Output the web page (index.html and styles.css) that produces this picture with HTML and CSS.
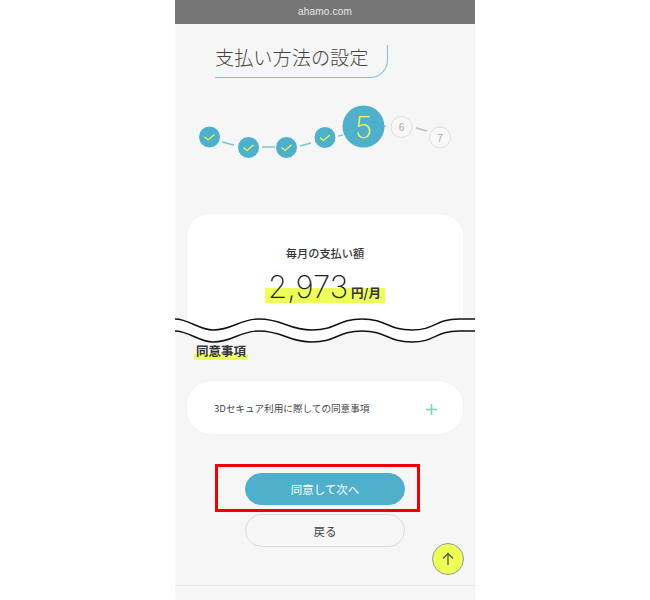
FILE: index.html
```html
<!DOCTYPE html>
<html lang="ja">
<head>
<meta charset="utf-8">
<title>支払い方法の設定</title>
<link rel="stylesheet" href="styles.css">
</head>
<body>
<div class="screen">
  <div class="urlbar">ahamo.com</div>
  <h1 class="title">支払い方法の設定</h1>
  <svg class="stepper" width="300" height="70" viewBox="0 0 300 70">
    <g class="links-done">
      <path d="M47 47 L59 50"/><path d="M87 52 L100 52"/><path d="M125 51 L136 48"/><path d="M163 41 L168 40"/>
    </g>
    <g class="links-todo">
      <path d="M208 31 L211 31"/><path d="M241 33 L252 36"/>
    </g>
    <g class="step-done">
      <circle cx="34.500" cy="42" r="11"/><circle cx="73.500" cy="52.500" r="11"/><circle cx="111.500" cy="52.500" r="11"/><circle cx="150" cy="42.500" r="11"/>
    </g>
    <g class="checks">
      <path d="M29.500 42 L33 45 L39.500 39.500"/><path d="M68.500 52.500 L72 55.500 L78.500 50"/><path d="M106.500 52.500 L110 55.500 L116.500 50"/><path d="M145 42.500 L148.500 45.500 L155 40"/>
    </g>
    <circle class="step-now" cx="188.500" cy="31.500" r="21"/>
    <text class="num-now" x="188.500" y="42.500" text-anchor="middle">5</text>
    <circle class="step-todo" cx="226.500" cy="32" r="10.500"/>
    <text class="num-todo" x="226.500" y="36" text-anchor="middle">6</text>
    <circle class="step-todo" cx="265" cy="42.500" r="10.500"/>
    <text class="num-todo" x="265" y="46.500" text-anchor="middle">7</text>
  </svg>
  <section class="card pay">
    <p class="pay-label">毎月の支払い額</p>
    <p class="pay-amount"><span class="mark"><span class="big">2,973</span><span class="unit">円/月</span></span></p>
  </section>
  <svg class="wave" width="300" height="28" viewBox="0 0 300 28">
    <path class="wave-bg" d="M0 15 C14 15,24 26,38 26 C58 26,64 15,84 15 C108 15,113 26,137 26 C162 26,162 15,187 15 C212 15,212 26,237 26 C260 26,260 15,284 15 C290 15,295 15,300 15 L300 28 L0 28 Z"/>
    <path class="wave-band" d="M0 3 C14 3,24 14,38 14 C58 14,64 3,84 3 C108 3,113 14,137 14 C162 14,162 3,187 3 C212 3,212 14,237 14 C260 14,260 3,284 3 C290 3,295 3,300 3 L300 15 C295 15,290 15,284 15 C260 15,260 26,237 26 C212 26,212 15,187 15 C162 15,162 26,137 26 C113 26,108 15,84 15 C64 15,58 26,38 26 C24 26,14 15,0 15 Z"/>
    <path class="wave-line" d="M0 3 C14 3,24 14,38 14 C58 14,64 3,84 3 C108 3,113 14,137 14 C162 14,162 3,187 3 C212 3,212 14,237 14 C260 14,260 3,284 3 C290 3,295 3,300 3"/>
    <path class="wave-line" d="M0 15 C14 15,24 26,38 26 C58 26,64 15,84 15 C108 15,113 26,137 26 C162 26,162 15,187 15 C212 15,212 26,237 26 C260 26,260 15,284 15 C290 15,295 15,300 15"/>
  </svg>
  <h2 class="section-title"><span class="section-mark">同意事項</span></h2>
  <div class="card accordion">
    <span class="accordion-text">3Dセキュア利用に際しての同意事項</span>
    <svg class="plus" width="11" height="11" viewBox="0 0 11 11"><path d="M5.500 0 V11 M0 5.500 H11"/></svg>
  </div>
  <div class="highlight-box">
    <button class="btn primary" type="button">同意して次へ</button>
  </div>
  <button class="btn secondary" type="button">戻る</button>
  <div class="pagetop">
    <svg width="14" height="14" viewBox="0 0 14 14"><path d="M7 13 V1.500 M2 6.500 L7 1.500 L12 6.500"/></svg>
  </div>
  <div class="footer-line"></div>
</div>
</body>
</html>
```
FILE: styles.css
```css
* { box-sizing: border-box; }
html, body { margin: 0; padding: 0; background: #fff; }
body {
  font-family: "Noto Sans CJK JP", "Noto Sans", sans-serif;
  color: #333;
}
.screen {
  position: relative;
  width: 300px;
  height: 600px;
  margin: 0 auto;
  background: #f6f6f6;
  overflow: hidden;
}
.urlbar {
  height: 24px;
  background: #767676;
  color: #e8e8e8;
  font: 10px/24px "Liberation Sans", sans-serif;
  text-align: center;
  letter-spacing: 0.2px;
}
.title {
  width: 173px;
  height: 33px;
  margin: 21px 0 0 40px;
  border-right: 1.5px solid #7cc6da;
  border-bottom: 1.5px solid #7cc6da;
  border-bottom-right-radius: 18px;
  font-size: 19.200px;
  font-weight: 300;
  line-height: 24px;
  color: #444;
  white-space: nowrap;
}
.stepper { display: block; margin-top: 17px; }
.links-done path { stroke: #7cc6da; stroke-width: 1.5; fill: none; }
.links-todo path { stroke: #bdbdbd; stroke-width: 1.5; fill: none; }
.step-done circle { fill: #4fb0cb; stroke: #fff; stroke-width: 1; }
.checks path { fill: none; stroke: #e6f75a; stroke-width: 1.2; }
.step-now { fill: #4fb0cb; }
.num-now { font: 200 30px "Inter", sans-serif; fill: #eefc55; }
.step-todo { fill: #f8f8f8; stroke: #dedede; stroke-width: 1; }
.num-todo { font: 10px "Liberation Sans", sans-serif; fill: #a8a8a8; }
.card {
  background: #fff;
  margin: 0 12px 0 12px;
  width: 276px;
}
.pay {
  height: 116px;
  margin-top: 49px;
  padding-top: 30px;
  border-radius: 22px 22px 0 0;
  box-shadow: 0 0 2px #eee;
  text-align: center;
}
.pay-label {
  margin: 0;
  font-size: 11.200px;
  line-height: 18px;
  font-weight: 500;
  color: #333;
}
.pay-amount { margin: 7px 0 0; line-height: 36px; height: 36px; }
.mark {
  display: inline-block;
  padding: 1px 4px 0 3px;
  background: linear-gradient(transparent 55%, #efff5a 55%, #efff5a 100%);
  height: 34px;
  line-height: 34px;
}
.big {
  font: 200 31px/34px "Inter", sans-serif;
  color: #222;
}
.unit { font-size: 12.500px; font-weight: 700; margin-left: 3px; color: #333; }
.wave { display: block; margin-top: -14px; position: relative; }
.wave-bg { fill: #f6f6f6; }
.wave-band { fill: #fff; }
.wave-line { fill: none; stroke: #111; stroke-width: 1.400; }
.section-title {
  margin: 0 0 0 19px;
  height: 17px;
  font-size: 12.500px;
  line-height: 14px;
  font-weight: 700;
  color: #333;
}
.section-mark {
  display: inline-block;
  height: 16px;
  padding: 0 2px;
  background: linear-gradient(transparent 60%, #efff5a 60%);
}
.accordion {
  display: flex;
  align-items: center;
  justify-content: space-between;
  height: 53px;
  margin-top: 20px;
  padding: 0 27px;
  border-radius: 24px;
  box-shadow: 0 0 2px #e8e8e8;
}
.accordion-text { font-size: 9.600px; line-height: 14px; color: #444; white-space: nowrap; }
.plus { margin-right: -1px; margin-top: 3px; }
.plus path { stroke: #74d8aa; stroke-width: 1.600; fill: none; }
.highlight-box {
  width: 205px;
  height: 48px;
  margin: 30px 0 0 40px;
  padding: 6px 0 0 27px;
  border: 3px solid #f00000;
}
.btn {
  display: block;
  width: 160px;
  height: 32px;
  border-radius: 17px;
  font-family: inherit;
  font-size: 11.500px;
  padding: 0;
}
.primary { background: #4fb0cb; color: #fff; border: 1px solid #4fb0cb; }
.secondary {
  height: 33px;
  margin: 2px 0 0 70px;
  background: #f6f6f6;
  color: #444;
  border: 1px solid #dcdcdc;
}
.pagetop {
  position: absolute;
  left: 257px;
  top: 543px;
  width: 32px;
  height: 32px;
  display: flex;
  align-items: center;
  justify-content: center;
  border-radius: 50%;
  background: #eeff55;
  border: 1px solid #999;
}
.pagetop path { fill: none; stroke: #555; stroke-width: 1.300; }
.footer-line { margin-top: 38px; border-top: 1px solid #e8e8e8; }
```
